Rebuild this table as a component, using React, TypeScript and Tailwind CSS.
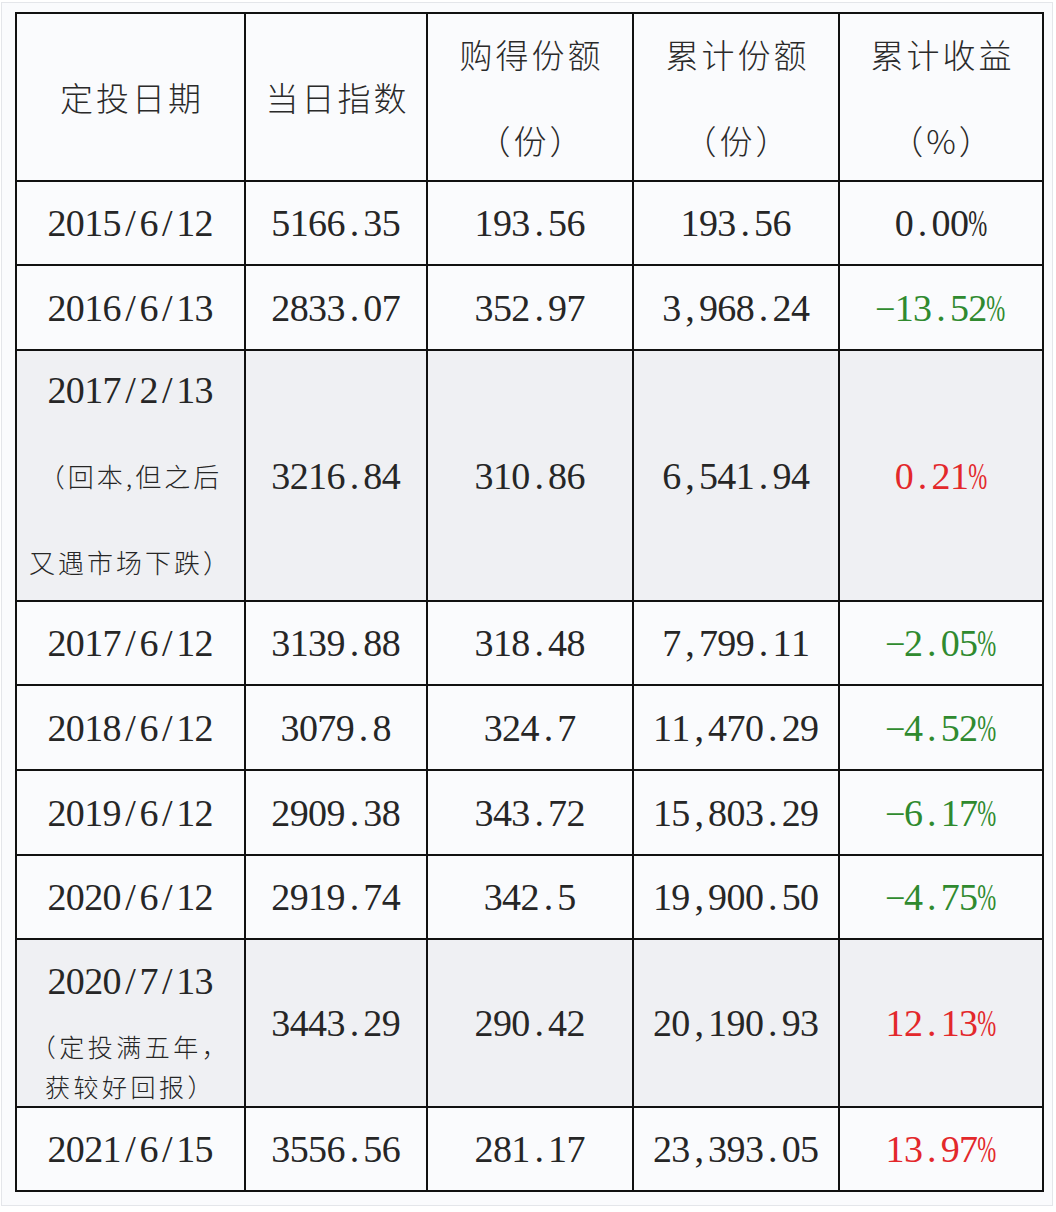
import React from "react";

type Row = {
  d: string;
  note?: string[];
  idx: string;
  buy: string;
  cum: string;
  ret: string;
  c: "k" | "g" | "r";
  h: string;
  gray?: boolean;
  noteKind?: "a" | "b";
};

const rows: Row[] = [
  { d: "2015/6/12", idx: "5166.35", buy: "193.56", cum: "193.56", ret: "0.00%", c: "k", h: "h-[84px]" },
  { d: "2016/6/13", idx: "2833.07", buy: "352.97", cum: "3,968.24", ret: "-13.52%", c: "g", h: "h-[85px]" },
  {
    d: "2017/2/13",
    note: ["（回本,但之后", "又遇市场下跌）"],
    noteKind: "a",
    idx: "3216.84",
    buy: "310.86",
    cum: "6,541.94",
    ret: "0.21%",
    c: "r",
    h: "h-[251px]",
    gray: true,
  },
  { d: "2017/6/12", idx: "3139.88", buy: "318.48", cum: "7,799.11", ret: "-2.05%", c: "g", h: "h-[84px]" },
  { d: "2018/6/12", idx: "3079.8", buy: "324.7", cum: "11,470.29", ret: "-4.52%", c: "g", h: "h-[85px]" },
  { d: "2019/6/12", idx: "2909.38", buy: "343.72", cum: "15,803.29", ret: "-6.17%", c: "g", h: "h-[85px]" },
  { d: "2020/6/12", idx: "2919.74", buy: "342.5", cum: "19,900.50", ret: "-4.75%", c: "g", h: "h-[84px]" },
  {
    d: "2020/7/13",
    note: ["（定投满五年，", "获较好回报）"],
    noteKind: "b",
    idx: "3443.29",
    buy: "290.42",
    cum: "20,190.93",
    ret: "12.13%",
    c: "r",
    h: "h-[168px]",
    gray: true,
  },
  { d: "2021/6/15", idx: "3556.56", buy: "281.17", cum: "23,393.05", ret: "13.97%", c: "r", h: "h-[84px]" },
];

const widths = ["w-[229px]", "w-[182px]", "w-[206px]", "w-[206px]", "w-[204px]"];

const serif = "font-['Liberation_Serif','Times_New_Roman',serif]";
const cjk = "font-['Noto_Sans_CJK_SC',sans-serif]";

function Num({ t, color }: { t: string; color: string }) {
  return (
    <span className={`inline-flex text-[38px] leading-none ${serif} ${color}`}>
      {[...t].map((ch, i) => (
        <span key={i} className="inline-flex w-[18.4px] justify-center">
          {ch === "%" ? (
            <span className="inline-block scale-x-[0.6]">%</span>
          ) : ch === "-" ? (
            <span className="inline-block scale-x-[1.7] scale-y-[0.6] -translate-y-[1px]">-</span>
          ) : (
            ch
          )}
        </span>
      ))}
    </span>
  );
}

function Cell({
  w,
  gray,
  children,
}: {
  w: string;
  gray?: boolean;
  children: React.ReactNode;
}) {
  return (
    <div
      className={`${w} shrink-0 flex flex-col items-center justify-center border-r-2 border-b-2 border-[#111] ${
        gray ? "bg-[#eff0f3]" : "bg-[#fafbfd]"
      }`}
    >
      {children}
    </div>
  );
}

function HeadText({ lines }: { lines: string[] }) {
  return (
    <div className={`flex flex-col items-center ${cjk} font-light text-[33px] text-[#2a2a2a]`}>
      {lines.map((l, i) => (
        <div key={i} className="leading-[86px] tracking-[3px] pl-[3px] whitespace-nowrap">
          {l}
        </div>
      ))}
    </div>
  );
}

export default function App() {
  const colorOf = (c: Row["c"]) =>
    c === "g" ? "text-[#2f8a2f]" : c === "r" ? "text-[#e3282b]" : "text-[#262626]";
  return (
    <div className="w-[1056px] h-[1212px] bg-white">
      <div className="ml-[1px] mt-[2px] w-[1052px] h-[1204px] border border-[#e4e6ea] bg-[#fafbfd] pl-[13px] pt-[9px]">
        <div className="w-[1029px] border-l-2 border-t-2 border-[#111]">
          {/* Header */}
          <div className="flex h-[168px]">
            <Cell w={widths[0]}>
              <HeadText lines={["定投日期"]} />
            </Cell>
            <Cell w={widths[1]}>
              <HeadText lines={["当日指数"]} />
            </Cell>
            <Cell w={widths[2]}>
              <HeadText lines={["购得份额", "（份）"]} />
            </Cell>
            <Cell w={widths[3]}>
              <HeadText lines={["累计份额", "（份）"]} />
            </Cell>
            <Cell w={widths[4]}>
              <HeadText lines={["累计收益", "（%）"]} />
            </Cell>
          </div>
          {rows.map((r, i) => (
            <div key={i} className={`flex ${r.h}`}>
              <Cell w={widths[0]} gray={r.gray}>
                {r.note ? (
                  r.noteKind === "a" ? (
                    <div className="flex flex-col items-center">
                      <div className="h-[86px] flex items-center">
                        <Num t={r.d} color="text-[#262626]" />
                      </div>
                      {r.note.map((n, j) => (
                        <div
                          key={j}
                          className={`h-[86px] flex items-center ${cjk} font-light text-[26px] tracking-[3px] text-[#262626] whitespace-nowrap`}
                        >
                          {n}
                        </div>
                      ))}
                    </div>
                  ) : (
                    <div className="flex flex-col items-center pb-[4px]">
                      <div className="h-[92px] flex items-center">
                        <Num t={r.d} color="text-[#262626]" />
                      </div>
                      {r.note.map((n, j) => (
                        <div
                          key={j}
                          className={`h-[40px] flex items-center ${cjk} font-light text-[25px] tracking-[3.5px] text-[#262626] whitespace-nowrap`}
                        >
                          {n}
                        </div>
                      ))}
                    </div>
                  )
                ) : (
                  <Num t={r.d} color="text-[#262626]" />
                )}
              </Cell>
              <Cell w={widths[1]} gray={r.gray}>
                <Num t={r.idx} color="text-[#262626]" />
              </Cell>
              <Cell w={widths[2]} gray={r.gray}>
                <Num t={r.buy} color="text-[#262626]" />
              </Cell>
              <Cell w={widths[3]} gray={r.gray}>
                <Num t={r.cum} color="text-[#262626]" />
              </Cell>
              <Cell w={widths[4]} gray={r.gray}>
                <Num t={r.ret} color={colorOf(r.c)} />
              </Cell>
            </div>
          ))}
        </div>
      </div>
    </div>
  );
}
